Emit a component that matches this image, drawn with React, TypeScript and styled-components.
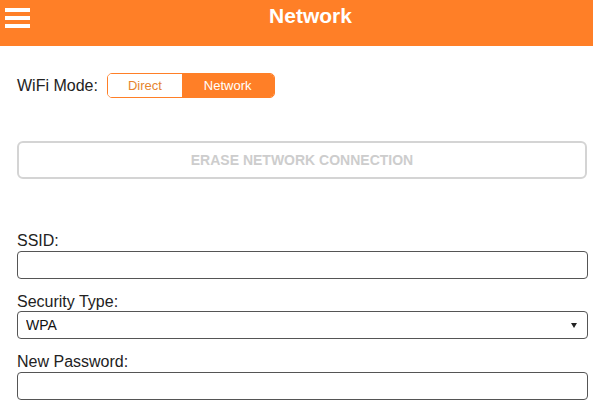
import React from "react";
import styled, { createGlobalStyle } from "styled-components";

const GlobalStyle = createGlobalStyle`
  html, body {
    margin: 0;
    padding: 0;
    background: #ffffff;
    font-family: "Liberation Sans", Arial, sans-serif;
    color: #222;
  }
  * { box-sizing: border-box; }
`;

const ORANGE = "#ff7f27";

const Header = styled.header`
  height: 46px;
  background: ${ORANGE};
  display: flex;
  align-items: flex-start;
`;

const MenuButton = styled.button`
  border: none;
  background: transparent;
  padding: 8px 0 0 5px;
  width: 30px;
  display: flex;
  flex-direction: column;
  gap: 4px;
  cursor: pointer;
`;

const MenuBar = styled.span`
  display: block;
  width: 25px;
  height: 4px;
  background: #ffffff;
`;

const Title = styled.h1`
  flex: 1;
  margin: 0;
  padding-top: 4px;
  text-align: center;
  color: #ffffff;
  font-size: 21px;
  line-height: 24px;
  font-weight: bold;
  padding-right: 2px;
`;

const Content = styled.main`
  padding: 0 5px 0 17px;
  display: flex;
  flex-direction: column;
`;

const ModeRow = styled.div`
  margin-top: 27px;
  display: flex;
  align-items: center;
  gap: 9px;
  height: 25px;
`;

const ModeLabel = styled.span`
  font-size: 16px;
  color: #222;
`;

const Segmented = styled.div`
  display: flex;
  height: 25px;
  border: 1px solid ${ORANGE};
  border-radius: 5px;
  overflow: hidden;
`;

const Segment = styled.button<{ $active?: boolean }>`
  border: none;
  margin: 0;
  padding: 0 ${(p) => (p.$active ? 22 : 20)}px;
  font-family: "Liberation Sans", Arial, sans-serif;
  font-size: 13px;
  background: ${(p) => (p.$active ? ORANGE : "#ffffff")};
  color: ${(p) => (p.$active ? "#ffffff" : "#e6852f")};
  cursor: pointer;
`;

const EraseButton = styled.button`
  margin-top: 43px;
  width: 570px;
  height: 38px;
  border: 2px solid #d4d4d4;
  border-radius: 6px;
  background: #ffffff;
  color: #cdcdcd;
  font-family: "Liberation Sans", Arial, sans-serif;
  font-weight: bold;
  font-size: 14px;
  text-transform: uppercase;
`;

const Form = styled.form`
  margin-top: 53px;
  display: flex;
  flex-direction: column;
  gap: 14px;
`;

const Field = styled.div`
  display: flex;
  flex-direction: column;
`;

const Label = styled.label<{ $gap?: number }>`
  font-size: 16px;
  line-height: 18px;
  color: #222;
  margin-bottom: ${(p) => p.$gap ?? 1}px;
`;

const TextInput = styled.input`
  width: 571px;
  height: 28px;
  border: 1px solid #555;
  border-radius: 4px;
  padding: 0 8px;
  font-family: "Liberation Sans", Arial, sans-serif;
  font-size: 14px;
  background: #fff;
`;

const SelectWrap = styled.div`
  position: relative;
  width: 571px;
`;

const Select = styled.select`
  appearance: none;
  -webkit-appearance: none;
  width: 100%;
  height: 28px;
  border: 1px solid #555;
  border-radius: 4px;
  padding: 0 8px;
  font-family: "Liberation Sans", Arial, sans-serif;
  font-size: 14px;
  color: #111;
  background: #fff;
`;

const Arrow = styled.span`
  position: absolute;
  right: 11px;
  top: 12px;
  width: 0;
  height: 0;
  border-left: 3px solid transparent;
  border-right: 3px solid transparent;
  border-top: 5px solid #222;
  pointer-events: none;
`;

export default function App() {
  return (
    <>
      <GlobalStyle />
      <Header>
        <MenuButton aria-label="Menu">
          <MenuBar />
          <MenuBar />
          <MenuBar />
        </MenuButton>
        <Title>Network</Title>
      </Header>
      <Content>
        <ModeRow>
          <ModeLabel>WiFi Mode:</ModeLabel>
          <Segmented>
            <Segment type="button">Direct</Segment>
            <Segment type="button" $active>
              Network
            </Segment>
          </Segmented>
        </ModeRow>
        <EraseButton type="button">Erase Network Connection</EraseButton>
        <Form onSubmit={(e) => e.preventDefault()}>
          <Field>
            <Label htmlFor="ssid">SSID:</Label>
            <TextInput id="ssid" type="text" />
          </Field>
          <Field>
            <Label htmlFor="sec" $gap={0}>
              Security Type:
            </Label>
            <SelectWrap>
              <Select id="sec" defaultValue="WPA">
                <option value="None">None</option>
                <option value="WEP">WEP</option>
                <option value="WPA">WPA</option>
              </Select>
              <Arrow />
            </SelectWrap>
          </Field>
          <Field>
            <Label htmlFor="pw">New Password:</Label>
            <TextInput id="pw" type="password" />
          </Field>
        </Form>
      </Content>
    </>
  );
}
